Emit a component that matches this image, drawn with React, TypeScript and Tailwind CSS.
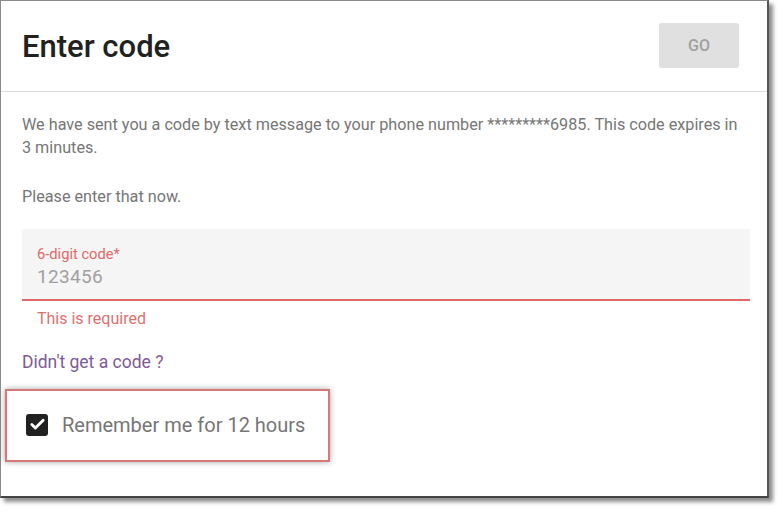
import { Check } from "lucide-react";

const font = { fontFamily: "Roboto, 'Liberation Sans', sans-serif" };

const App = () => {
  return (
    <div className="w-[783px] h-[514px] bg-white" style={font}>
      <div className="w-[769px] h-[498px] bg-white border-t border-l border-t-[#8a8a8a] border-l-[#8a8a8a] border-r-2 border-b-2 border-r-[#555] border-b-[#444] shadow-[4px_4px_4px_rgba(0,0,0,0.45)] flex flex-col">
        {/* header */}
        <div className="h-[91px] shrink-0 border-b border-[#dddddd] flex items-center justify-between pl-[21px] pr-[28px]">
          <h1 className="text-[31px] font-medium text-[#212121] mt-[2px]">
            Enter code
          </h1>
          <button className="w-[80px] h-[45px] rounded-[3px] bg-[#e0e0e0] text-[16px] font-medium text-[#a0a0a0] mt-[-1px]">
            GO
          </button>
        </div>

        {/* body */}
        <div className="px-[21px] pt-[21px] flex flex-col">
          <p className="text-[16.2px] leading-[23px] text-[#767676] whitespace-nowrap">
            We have sent you a code by text message to your phone number *********6985. This code expires in
            <br />3 minutes.
          </p>
          <p className="text-[16.2px] leading-[23px] text-[#767676] mt-[26px]">
            Please enter that now.
          </p>

          <div className="mt-[21px] w-[728px] h-[72px] bg-[#f5f5f5] border-b-2 border-b-[#e36868] px-[15px] pt-[15px] flex flex-col">
            <span className="text-[14.7px] leading-[20px] text-[#df6a6a]">6-digit code*</span>
            <span className="text-[19px] leading-[22px] text-[#a0a0a0] tracking-[0.3px] mt-[2px]">123456</span>
          </div>
          <span className="pl-[15px] mt-[7px] text-[16px] leading-[22px] text-[#e07070]">
            This is required
          </span>
          <span className="mt-[21px] text-[17.5px] leading-[22px] text-[#7e5b95]">
            Didn't get a code ?
          </span>
        </div>

        <div className="ml-[4px] mt-[16px] w-[325px] h-[73px] border-2 border-[#d6777a] shadow-[0_0_6px_rgba(0,0,0,0.35)] flex items-center pl-[19px] gap-[14px] pb-[2px]">
          <span className="w-[22px] h-[22px] rounded-[3px] bg-[#212121] flex items-center justify-center">
            <Check className="w-[17px] h-[17px] text-white" strokeWidth={4} />
          </span>
          <span className="text-[20px] leading-[24px] text-[#767676]">Remember me for 12 hours</span>
        </div>
      </div>
    </div>
  );
};

export default App;
